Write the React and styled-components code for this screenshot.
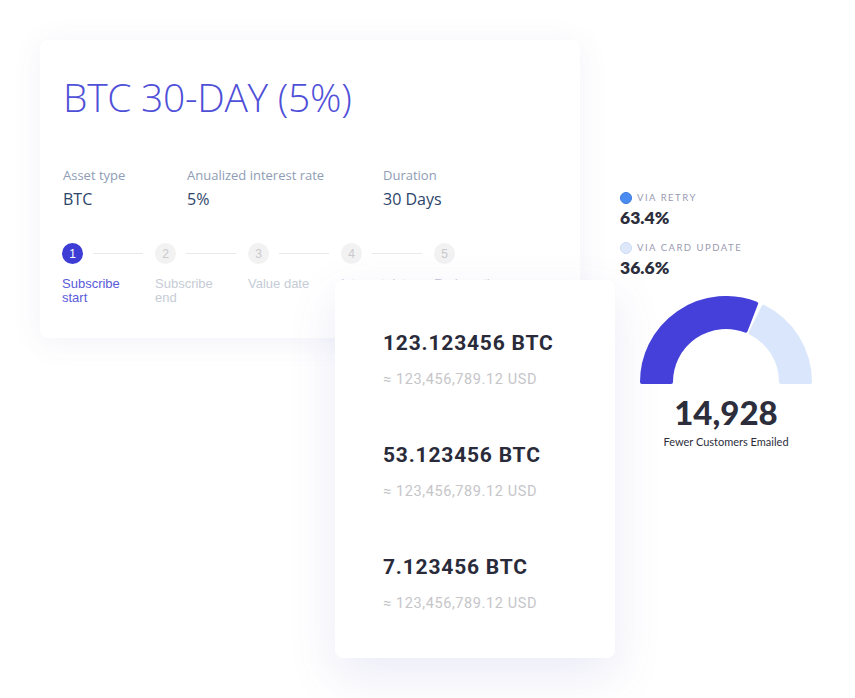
import styled, { createGlobalStyle } from "styled-components"

const steps = [
	{ n: 1, label: "Subscribe start", active: true },
	{ n: 2, label: "Subscribe end" },
	{ n: 3, label: "Value date" },
	{ n: 4, label: "Interest date" },
	{ n: 5, label: "Redemption" },
]

const amounts = ["123.123456 BTC", "53.123456 BTC", "7.123456 BTC"]

// arc helper for the gauge
function arcPath(cx, cy, r1, r2, a0, a1) {
	const p = (r, a) => {
		const rad = (a * Math.PI) / 180
		return [cx + r * Math.cos(rad), cy - r * Math.sin(rad)]
	}
	const [x0, y0] = p(r2, a0)
	const [x1, y1] = p(r2, a1)
	const [x2, y2] = p(r1, a1)
	const [x3, y3] = p(r1, a0)
	return `M${x0} ${y0} A${r2} ${r2} 0 0 1 ${x1} ${y1} L${x2} ${y2} A${r1} ${r1} 0 0 0 ${x3} ${y3} Z`
}

function App() {
	return (
		<Canvas>
			<GlobalStyle />
			<ProductCard>
				<Title>BTC 30-DAY (5%)</Title>
				<Facts>
					<Fact $w="124px">
						<FactLabel>Asset type</FactLabel>
						<FactValue>BTC</FactValue>
					</Fact>
					<Fact $w="196px">
						<FactLabel>Anualized interest rate</FactLabel>
						<FactValue>5%</FactValue>
					</Fact>
					<Fact>
						<FactLabel>Duration</FactLabel>
						<FactValue>30 Days</FactValue>
					</Fact>
				</Facts>
				<Steps>
					{steps.map((s, i) => (
						<Step key={s.n}>
							<StepHead>
								<StepDot $active={s.active}>{s.n}</StepDot>
								{i < steps.length - 1 && <StepLine />}
							</StepHead>
							<StepLabel $active={s.active}>{s.label}</StepLabel>
						</Step>
					))}
				</Steps>
			</ProductCard>

			<AmountCard>
				{amounts.map((a) => (
					<AmountRow key={a}>
						<Amount>{a}</Amount>
						<Fiat>≈ 123,456,789.12 USD</Fiat>
					</AmountRow>
				))}
			</AmountCard>

			<GaugePanel>
				<Legend>
					<LegendItem>
						<LegendTitle>
							<Dot $color="#4b8cf2" $ring="#3a78e0" />
							VIA RETRY
						</LegendTitle>
						<LegendValue>63.4%</LegendValue>
					</LegendItem>
					<LegendItem>
						<LegendTitle>
							<Dot $color="#dde8fb" $ring="#cbdaf5" />
							VIA CARD UPDATE
						</LegendTitle>
						<LegendValue>36.6%</LegendValue>
					</LegendItem>
				</Legend>
				<Gauge>
					<svg width="176" height="90" viewBox="0 0 176 90">
						<path
							d={arcPath(88, 86, 55, 84, 180, 69)}
							fill="#4440d9"
							stroke="#4440d9"
							strokeWidth="4"
							strokeLinejoin="round"
						/>
						<path
							d={arcPath(88, 86, 55, 84, 63.5, 0)}
							fill="#d9e6fb"
							stroke="#d9e6fb"
							strokeWidth="4"
							strokeLinejoin="round"
						/>
					</svg>
					<GaugeNumber>14,928</GaugeNumber>
					<GaugeCaption>Fewer Customers Emailed</GaugeCaption>
				</Gauge>
			</GaugePanel>
		</Canvas>
	)
}

export default App

const Canvas = styled.div`
	position: relative;
	width: 855px;
	height: 698px;
	background: #ffffff;
	overflow: hidden;
`

const ProductCard = styled.div`
	position: absolute;
	left: 40px;
	top: 40px;
	width: 540px;
	height: 298px;
	box-sizing: border-box;
	padding: 30px 23px 0;
	background: #fff;
	border-radius: 8px;
	box-shadow: 0 4px 30px rgba(90, 90, 160, 0.08);
	display: flex;
	flex-direction: column;
`

const Title = styled.h1`
	margin: 0;
	font-family: "Open Sans", sans-serif;
	font-weight: 300;
	font-size: 39px;
	line-height: 54px;
	color: #4f50d8;
	letter-spacing: -0.3px;
`

const Facts = styled.div`
	display: flex;
	margin-top: 42px;
`

const Fact = styled.div`
	width: ${(p) => p.$w || "auto"};
	display: flex;
	flex-direction: column;
	gap: 4px;
`

const FactLabel = styled.span`
	font-family: "Open Sans", sans-serif;
	font-size: 13px;
	line-height: 18px;
	color: #8e9db5;
`

const FactValue = styled.span`
	font-family: "Open Sans", sans-serif;
	font-size: 16px;
	line-height: 22px;
	color: #2d4569;
`

const Steps = styled.div`
	display: flex;
	margin-top: 33px;
	margin-left: -1px;
`

const Step = styled.div`
	width: 93px;
	display: flex;
	flex-direction: column;
`

const StepHead = styled.div`
	display: flex;
	align-items: center;
	gap: 10px;
`

const StepDot = styled.div`
	width: 21px;
	height: 21px;
	flex: none;
	border-radius: 50%;
	background: ${(p) => (p.$active ? "#3d3dd6" : "#f2f2f3")};
	color: ${(p) => (p.$active ? "#fff" : "#c9c9cc")};
	font-family: "Liberation Sans", sans-serif;
	font-size: 12px;
	display: flex;
	align-items: center;
	justify-content: center;
`

const StepLine = styled.div`
	width: 50px;
	height: 1px;
	background: #e8e9ec;
`

const StepLabel = styled.div`
	margin-top: 13px;
	width: 78px;
	font-family: "Liberation Sans", sans-serif;
	font-size: 13px;
	line-height: 14px;
	color: ${(p) => (p.$active ? "#5a5ad9" : "#c6ccd6")};
`

const AmountCard = styled.div`
	position: absolute;
	left: 335px;
	top: 280px;
	width: 280px;
	height: 378px;
	box-sizing: border-box;
	padding: 50px 48px 0;
	background: #fff;
	border-radius: 8px;
	box-shadow: 0 18px 48px rgba(100, 100, 190, 0.13);
	display: flex;
	flex-direction: column;
	gap: 54px;
`

const AmountRow = styled.div`
	display: flex;
	flex-direction: column;
	gap: 16px;
`

const Amount = styled.div`
	font-family: Roboto, sans-serif;
	font-weight: 700;
	font-size: 21px;
	line-height: 26px;
	letter-spacing: 0.8px;
	color: #2a2b3a;
`

const Fiat = styled.div`
	font-family: Roboto, sans-serif;
	font-size: 14.5px;
	line-height: 16px;
	letter-spacing: 0.6px;
	color: #c6c6c9;
`

const GaugePanel = styled.div`
	position: absolute;
	left: 620px;
	top: 190px;
	width: 210px;
	display: flex;
	flex-direction: column;
`

const Legend = styled.div`
	display: flex;
	flex-direction: column;
	gap: 12px;
`

const LegendItem = styled.div`
	display: flex;
	flex-direction: column;
	gap: 2px;
`

const LegendTitle = styled.div`
	display: flex;
	align-items: center;
	gap: 5px;
	font-family: Lato, sans-serif;
	font-size: 9.5px;
	letter-spacing: 1.5px;
	color: #9a9ab2;
	line-height: 16px;
`

const Dot = styled.span`
	width: 10px;
	height: 10px;
	border-radius: 50%;
	background: ${(p) => p.$color};
	border: 1px solid ${(p) => p.$ring};
`

const LegendValue = styled.div`
	font-family: Lato, sans-serif;
	font-weight: 800;
	font-size: 17.5px;
	line-height: 20px;
	color: #2d2e3c;
`

const Gauge = styled.div`
	margin-top: 18px;
	margin-left: 18px;
	width: 176px;
	display: flex;
	flex-direction: column;
	align-items: center;
`

const GaugeNumber = styled.div`
	margin-top: 8px;
	font-family: Lato, sans-serif;
	font-weight: 900;
	font-size: 33px;
	line-height: 36px;
	color: #2d2e3c;
`

const GaugeCaption = styled.div`
	margin-top: 5px;
	font-family: Lato, sans-serif;
	font-size: 11px;
	color: #2d2e3c;
`

const GlobalStyle = createGlobalStyle`
body {
  margin: 0;
  background: #fff;
  -webkit-font-smoothing: antialiased;
}
`
